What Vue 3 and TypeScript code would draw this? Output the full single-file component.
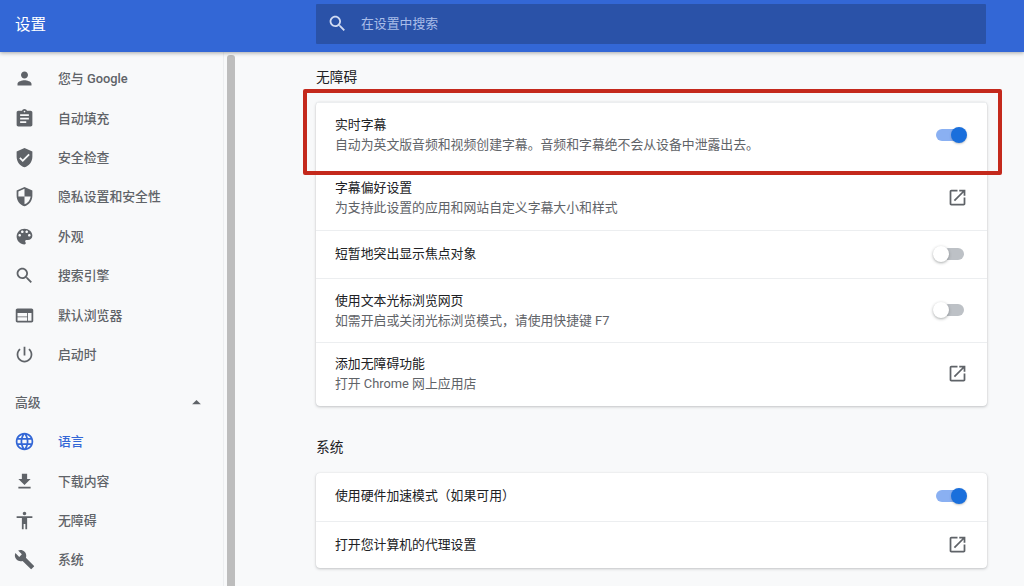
<script setup lang="ts">
const p: Record<string, string> = {
  person: 'M12 12c2.21 0 4-1.79 4-4s-1.79-4-4-4-4 1.79-4 4 1.79 4 4 4zm0 2c-2.67 0-8 1.34-8 4v2h16v-2c0-2.66-5.33-4-8-4z',
  assignment: 'M19 3h-4.18C14.4 1.84 13.3 1 12 1c-1.3 0-2.4.84-2.82 2H5c-1.1 0-2 .9-2 2v14c0 1.1.9 2 2 2h14c1.1 0 2-.9 2-2V5c0-1.1-.9-2-2-2zm-7 0c.55 0 1 .45 1 1s-.45 1-1 1-1-.45-1-1 .45-1 1-1zm2 14H7v-2h7v2zm3-4H7v-2h10v2zm0-4H7V7h10v2z',
  verified: 'M12 1L3 5v6c0 5.55 3.84 10.74 9 12 5.16-1.26 9-6.45 9-12V5l-9-4zm-2 16l-4-4 1.41-1.41L10 14.17l6.59-6.59L18 9l-8 8z',
  security: 'M12 1L3 5v6c0 5.55 3.84 10.74 9 12 5.16-1.26 9-6.45 9-12V5l-9-4zm0 10.99h7c-.53 4.12-3.28 7.79-7 8.94V12H5V6.3l7-3.11v8.8z',
  palette: 'M12 3c-4.97 0-9 4.03-9 9s4.03 9 9 9c.83 0 1.5-.67 1.5-1.5 0-.39-.15-.74-.39-1.01-.23-.26-.38-.61-.38-.99 0-.83.67-1.5 1.5-1.5H16c2.76 0 5-2.24 5-5 0-4.42-4.03-8-9-8zm-5.5 9c-.83 0-1.5-.67-1.5-1.5S5.67 9 6.5 9 8 9.67 8 10.5 7.33 12 6.5 12zm3-4C8.67 8 8 7.33 8 6.5S8.67 5 9.5 5s1.5.67 1.5 1.5S10.33 8 9.5 8zm5 0c-.83 0-1.5-.67-1.5-1.5S13.67 5 14.5 5s1.5.67 1.5 1.5S15.33 8 14.5 8zm3 4c-.83 0-1.5-.67-1.5-1.5S16.67 9 17.5 9s1.5.67 1.5 1.5-.67 1.5-1.5 1.5z',
  search: 'M15.5 14h-.79l-.28-.27C15.41 12.59 16 11.11 16 9.5 16 5.91 13.09 3 9.5 3S3 5.91 3 9.5 5.91 16 9.5 16c1.61 0 3.09-.59 4.23-1.57l.27.28v.79l5 4.99L20.49 19l-4.99-5zm-6 0C7.01 14 5 11.99 5 9.5S7.01 5 9.5 5 14 7.01 14 9.5 11.99 14 9.5 14z',
  web: 'M20 4H4c-1.1 0-2 .9-2 2v12c0 1.1.9 2 2 2h16c1.1 0 2-.9 2-2V6c0-1.1-.9-2-2-2zm-5 14H4v-4h11v4zm0-5H4V9h11v4zm5 5h-4V9h4v9z',
  power: 'M13 3h-2v10h2V3zm4.83 2.17l-1.42 1.42C17.99 7.86 19 9.81 19 12c0 3.87-3.13 7-7 7s-7-3.13-7-7c0-2.19 1.01-4.14 2.58-5.42L6.17 5.17C4.23 6.82 3 9.26 3 12c0 4.97 4.03 9 9 9s9-4.03 9-9c0-2.74-1.23-5.18-3.17-6.83z',
  language: 'M11.99 2C6.47 2 2 6.48 2 12s4.47 10 9.99 10C17.52 22 22 17.52 22 12S17.52 2 11.99 2zm6.93 6h-2.95c-.32-1.25-.78-2.45-1.38-3.56 1.84.63 3.37 1.91 4.33 3.56zM12 4.04c.83 1.2 1.48 2.53 1.91 3.96h-3.82c.43-1.43 1.08-2.76 1.91-3.96zM4.26 14C4.1 13.36 4 12.69 4 12s.1-1.36.26-2h3.38c-.08.66-.14 1.32-.14 2 0 .68.06 1.34.14 2H4.26zm.82 2h2.95c.32 1.25.78 2.45 1.38 3.56-1.84-.63-3.37-1.9-4.33-3.56zm2.95-8H5.08c.96-1.66 2.49-2.93 4.33-3.56C8.81 5.55 8.35 6.75 8.03 8zM12 19.96c-.83-1.2-1.48-2.53-1.91-3.96h3.82c-.43 1.43-1.08 2.76-1.91 3.96zM14.34 14H9.66c-.09-.66-.16-1.32-.16-2 0-.68.07-1.35.16-2h4.68c.09.65.16 1.32.16 2 0 .68-.07 1.34-.16 2zm.25 5.56c.6-1.11 1.06-2.31 1.38-3.56h2.95c-.96 1.65-2.49 2.93-4.33 3.56zM16.36 14c.08-.66.14-1.32.14-2 0-.68-.06-1.34-.14-2h3.38c.16.64.26 1.31.26 2s-.1 1.36-.26 2h-3.38z',
  download: 'M19 9h-4V3H9v6H5l7 7 7-7zM5 18v2h14v-2H5z',
  access: 'M12 2c1.1 0 2 .9 2 2s-.9 2-2 2-2-.9-2-2 .9-2 2-2zm9 7h-6v13h-2v-6h-2v6H9V9H3V7h18v2z',
  build: 'M22.7 19l-9.1-9.1c.9-2.3.4-5-1.5-6.9-2-2-5-2.4-7.4-1.3L9 6 6 9 1.6 4.7C.4 7.1.9 10.1 2.9 12.1c1.9 1.9 4.6 2.4 6.9 1.5l9.1 9.1c.4.4 1 .4 1.4 0l2.3-2.3c.5-.4.5-1.1.1-1.4z',
  open: 'M19 19H5V5h7V3H5c-1.11 0-2 .9-2 2v14c0 1.1.89 2 2 2h14c1.1 0 2-.9 2-2v-7h-2v7zM14 3v2h3.59l-9.83 9.83 1.41 1.41L19 6.41V10h2V3h-7z',
  up: 'M7 14l5-5 5 5z'
}

const basic = [
  { icon: 'person', label: '您与 Google' },
  { icon: 'assignment', label: '自动填充' },
  { icon: 'verified', label: '安全检查' },
  { icon: 'security', label: '隐私设置和安全性' },
  { icon: 'palette', label: '外观' },
  { icon: 'search', label: '搜索引擎' },
  { icon: 'web', label: '默认浏览器' },
  { icon: 'power', label: '启动时' }
]
const advanced = [
  { icon: 'language', label: '语言', active: true },
  { icon: 'download', label: '下载内容' },
  { icon: 'access', label: '无障碍' },
  { icon: 'build', label: '系统' }
]

type Row = { title: string; sub?: string; action: 'on' | 'off' | 'open'; flush?: boolean }
const a11y: Row[] = [
  { title: '实时字幕', sub: '自动为英文版音频和视频创建字幕。音频和字幕绝不会从设备中泄露出去。', action: 'on', flush: true },
  { title: '字幕偏好设置', sub: '为支持此设置的应用和网站自定义字幕大小和样式', action: 'open' },
  { title: '短暂地突出显示焦点对象', action: 'off' },
  { title: '使用文本光标浏览网页', sub: '如需开启或关闭光标浏览模式，请使用快捷键 F7', action: 'off' },
  { title: '添加无障碍功能', sub: '打开 Chrome 网上应用店', action: 'open' }
]
const system: Row[] = [
  { title: '使用硬件加速模式（如果可用）', action: 'on' },
  { title: '打开您计算机的代理设置', action: 'open' }
]
const sections = [
  { title: '无障碍', rows: a11y, mark: true },
  { title: '系统', rows: system, mark: false }
]
</script>

<template>
  <div class="page">
    <header class="top">
      <h1 class="brand">设置</h1>
      <div class="search">
        <svg class="icon search-icon" viewBox="0 0 24 24"><path :d="p.search" /></svg>
        <span class="hint">在设置中搜索</span>
      </div>
    </header>
    <div class="body">
      <nav class="side">
        <a v-for="item in basic" :key="item.label" class="nav">
          <svg class="icon" viewBox="0 0 24 24"><path :d="p[item.icon]" /></svg>
          <span class="lift">{{ item.label }}</span>
        </a>
        <div class="adv">
          <span class="lift">高级</span>
          <svg class="icon" viewBox="0 0 24 24"><path :d="p.up" /></svg>
        </div>
        <a v-for="item in advanced" :key="item.label" class="nav" :class="{ active: item.active }">
          <svg class="icon" viewBox="0 0 24 24"><path :d="p[item.icon]" /></svg>
          <span class="lift">{{ item.label }}</span>
        </a>
      </nav>
      <div class="scrollbar"></div>
      <main class="main">
        <section v-for="s in sections" :key="s.title" class="section">
          <h2 class="heading">{{ s.title }}</h2>
          <div class="card">
            <div v-if="s.mark" class="mark"></div>
            <div
              v-for="r in s.rows"
              :key="r.title"
              class="row"
              :class="{ tall: r.sub, flush: r.flush }"
            >
              <div class="copy">
                <div class="title">{{ r.title }}</div>
                <div v-if="r.sub" class="sub">{{ r.sub }}</div>
              </div>
              <svg v-if="r.action === 'open'" class="icon open" viewBox="0 0 24 24"><path :d="p.open" /></svg>
              <div v-else class="toggle" :class="r.action">
                <i></i>
              </div>
            </div>
          </div>
        </section>
      </main>
    </div>
  </div>
</template>

<style>
html, body { margin: 0; background: #f8f9fa; }
</style>

<style scoped>
.page {
  width: 1024px;
  height: 586px;
  overflow: hidden;
  display: flex;
  flex-direction: column;
  background: #f8f9fa;
  font-family: Roboto, "Noto Sans CJK SC", sans-serif;
  font-size: 12.85px;
  color: #202124;
}
.top {
  height: 52px;
  flex: none;
  display: flex;
  background: #3367d6;
  box-shadow: 0 1px 4px rgba(60, 64, 67, 0.45);
  position: relative;
  z-index: 2;
}
.brand {
  width: 316px;
  margin: 0;
  padding: 0 0 0 15px;
  box-sizing: border-box;
  font-size: 15.5px;
  font-weight: 400;
  line-height: 50px;
  color: #fff;
}
.icon {
  width: 21px;
  height: 21px;
  flex: none;
  fill: #5f6368;
}
.search {
  width: 670px;
  height: 40px;
  margin-top: 4px;
  padding-left: 11px;
  box-sizing: border-box;
  display: flex;
  align-items: center;
  gap: 13px;
  background: #2a52a8;
  border-radius: 1px;
  color: #a9bde8;
}
.search .search-icon {
  fill: #d2dcf3;
  margin-bottom: 2px;
}
.hint { padding-bottom: 4px; }
.lift { padding-bottom: 2px; }
.body {
  flex: 1;
  min-height: 0;
  display: flex;
}
.side {
  width: 224px;
  flex: none;
  box-sizing: border-box;
  padding-top: 7px;
  border-right: 1px solid #eceef0;
  color: #5f6368;
  font-weight: 500;
}
.nav {
  height: 39.4px;
  padding-left: 14px;
  display: flex;
  align-items: center;
  gap: 23px;
}
.nav.active { color: #3367d6; }
.nav.active .icon { fill: #3367d6; }
.adv {
  height: 40px;
  margin-top: 8px;
  padding: 0 16px 0 15px;
  display: flex;
  align-items: center;
  justify-content: space-between;
}
.scrollbar {
  width: 8px;
  flex: none;
  margin: 3px 0 0 3px;
  background: #bdbdbd;
  border-radius: 3px 3px 0 0;
}
.main {
  width: 671px;
  flex: none;
  margin-left: 81px;
  padding-top: 12px;
}
.section + .section { margin-top: 28px; }
.heading {
  margin: 0 0 12px;
  font-size: 13.7px;
  font-weight: 400;
  line-height: 26px;
  color: #202124;
}
.section + .section .heading { margin-bottom: 13px; }
.card {
  position: relative;
  background: #fff;
  border-radius: 4px;
  box-shadow: 0 1px 3px rgba(60, 64, 67, 0.28), 0 0 1px rgba(60, 64, 67, 0.18);
}
.mark {
  position: absolute;
  left: -13px;
  top: -13px;
  width: 699px;
  height: 86px;
  box-sizing: border-box;
  border: 4px solid #c4291c;
  border-radius: 2px;
  pointer-events: none;
}
.row {
  height: 48px;
  box-sizing: border-box;
  padding: 0 19px 2px 19px;
  display: flex;
  align-items: center;
  justify-content: space-between;
  border-top: 1px solid #eceef0;
}
.row:first-of-type, .row.flush + .row { border-top: none; }
.row:last-child { height: 47px; padding-bottom: 1px; }
.row.tall, .row.tall:last-child { height: 64px; padding-bottom: 2px; }
.row.tall.flush { padding-bottom: 0; }
.row.tall:not(.flush):not(:last-child) .copy { padding-top: 2px; }
.copy { line-height: 20px; }
.title { color: #202124; }
.sub { color: #5f6368; }
.toggle {
  position: relative;
  width: 28px;
  height: 12px;
  margin-right: 4px;
  border-radius: 6px;
  flex: none;
}
.toggle i {
  position: absolute;
  top: -2px;
  width: 16px;
  height: 16px;
  border-radius: 50%;
}
.toggle.on { background: #8ab0f2; }
.toggle.on i {
  right: -3px;
  background: #1a6fdc;
  box-shadow: 0 1px 2px rgba(60, 64, 67, 0.3);
}
.toggle.off { background: #bdc1c6; }
.toggle.off i {
  left: -3px;
  background: #fff;
  box-shadow: 0 1px 3px rgba(60, 64, 67, 0.45);
}
</style>
